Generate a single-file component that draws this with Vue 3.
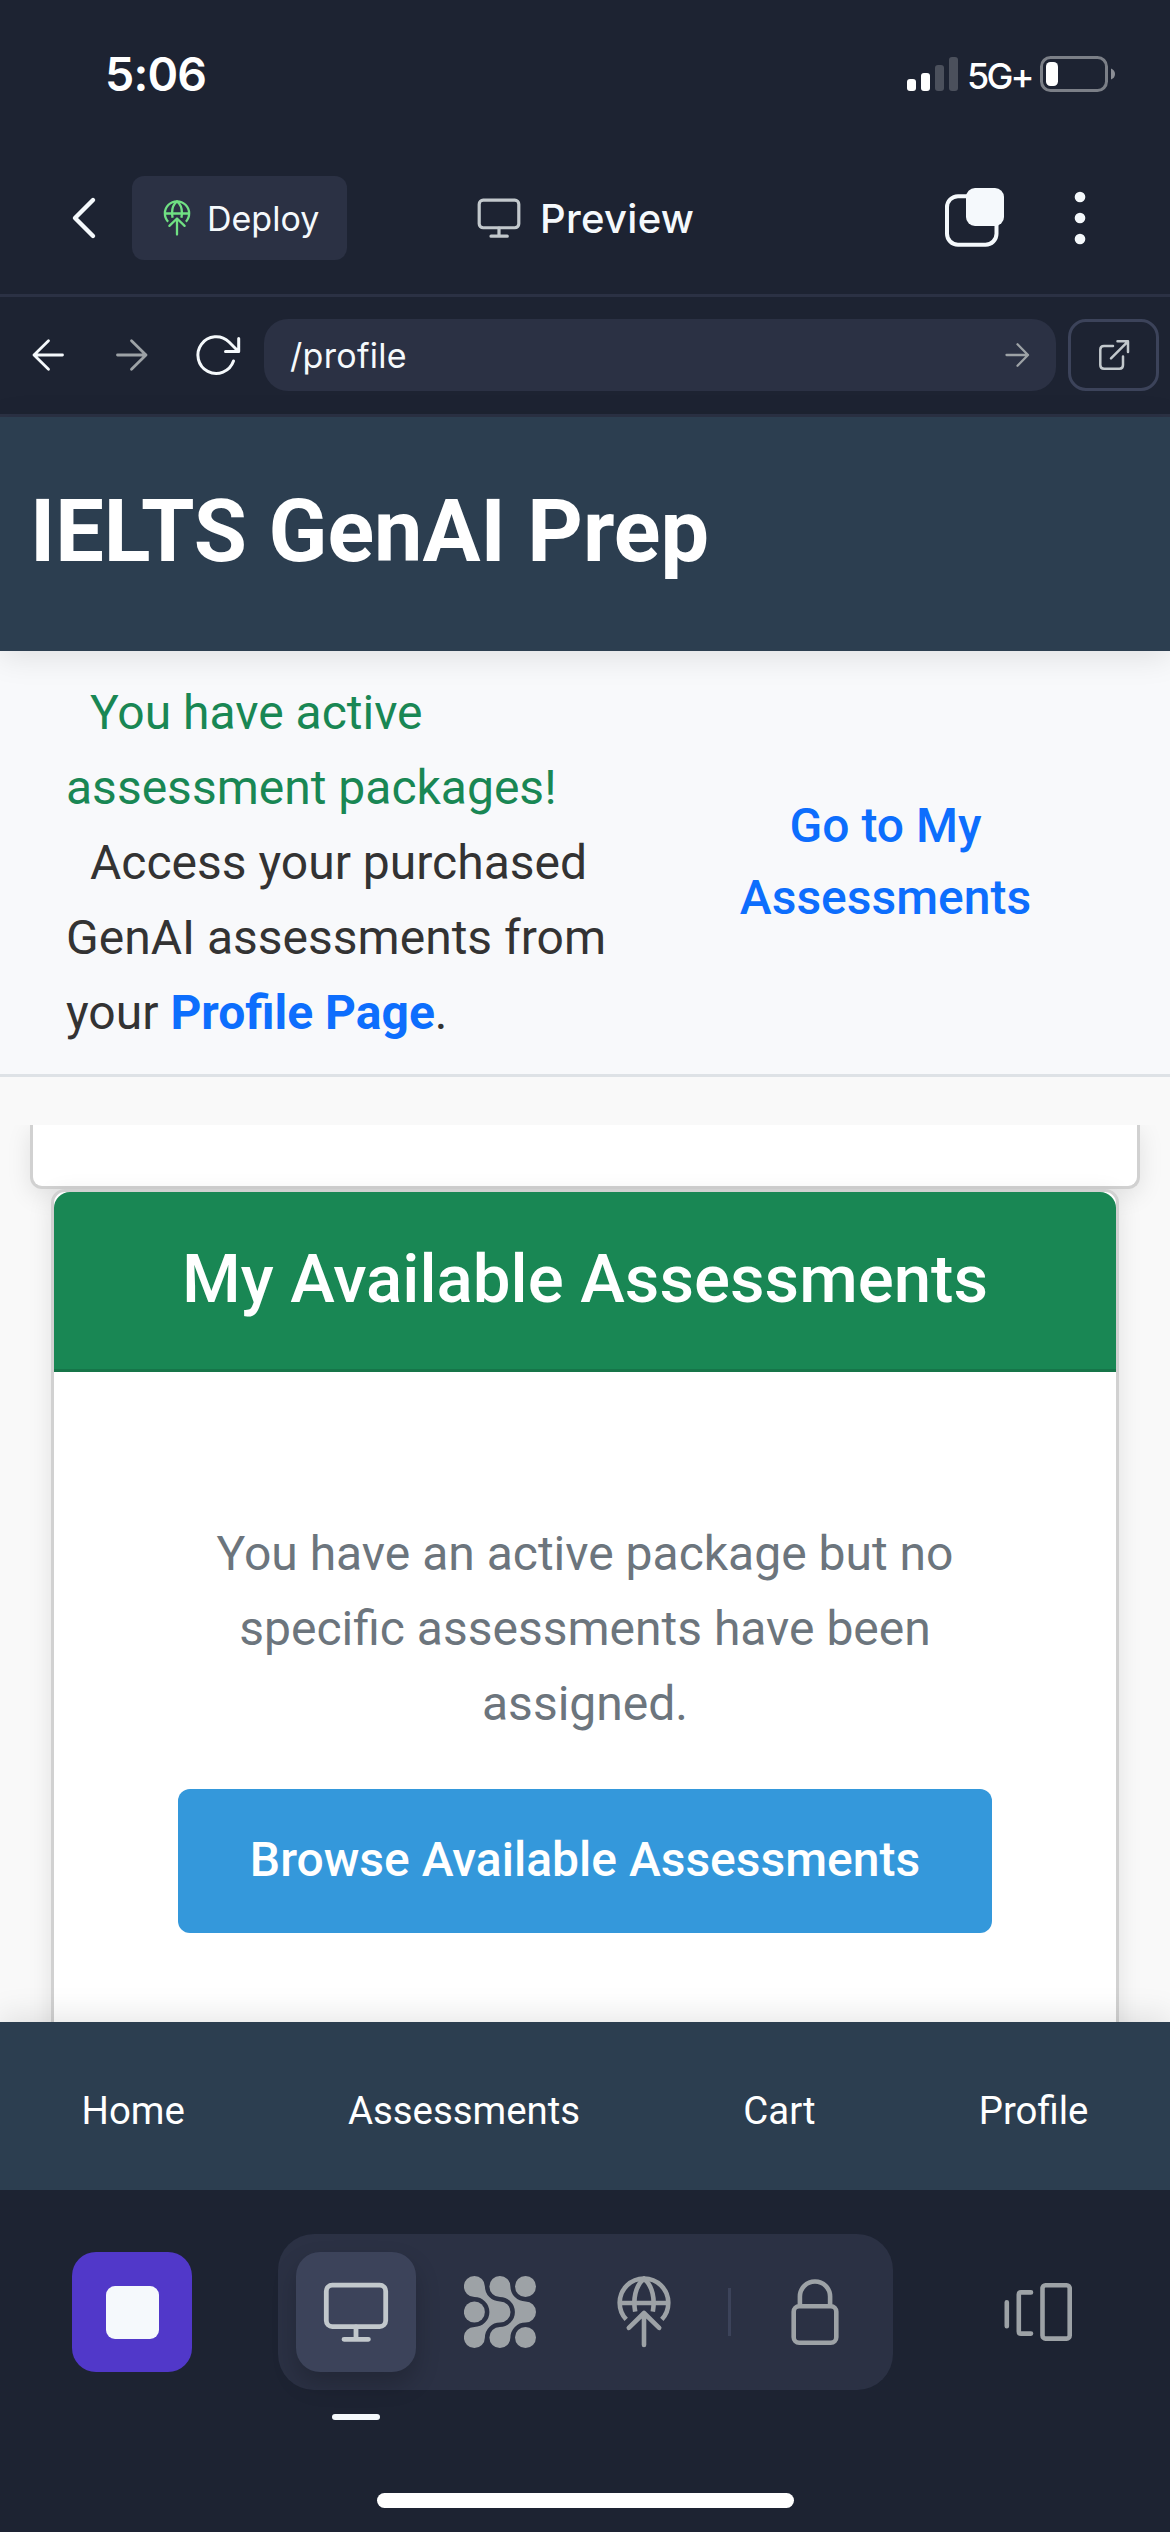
<script setup>
const signal = [
  { h: 12, on: true },
  { h: 18, on: true },
  { h: 26, on: false },
  { h: 34, on: false }
]
const links = ['Home', 'Assessments', 'Cart', 'Profile']
</script>

<template>
  <div class="screen">
    <svg class="defs" width="0" height="0" aria-hidden="true">
      <symbol id="deploy" viewBox="0 0 72 72">
        <g fill="none" stroke="currentColor" stroke-width="4.6">
          <path d="M18.2 43.4A24.3 24.3 0 1 1 53.8 43.4M12 27H60" />
          <path d="M27.2 35.6C25 24 27 10 36 2.8C45 10 47 24 44.8 35.6" />
          <path d="M36 37.5V69M20.8 51.8L36 37L51.2 51.8" stroke-linecap="round" stroke-linejoin="round" />
        </g>
      </symbol>
      <symbol id="monitor" viewBox="0 0 72 72">
        <g fill="none" stroke="currentColor" stroke-width="4.8" stroke-linecap="round">
          <rect x="6.3" y="9.2" width="59.4" height="41.4" rx="6" />
          <path d="M36 51V63M24 63.3H48.4" />
        </g>
      </symbol>
    </svg>

    <div class="status">
      <span class="time">5:06</span>
      <div class="status-right">
        <div class="signal">
          <i v-for="(s, i) in signal" :key="i" :class="{ on: s.on }" :style="{ height: s.h + 'px' }"></i>
        </div>
        <span class="net">5G+</span>
        <svg class="battery" width="76" height="36" viewBox="0 0 76 36">
          <rect x="1.5" y="1.5" width="65" height="33" rx="9" fill="none" stroke="#7b7f87" stroke-width="3" />
          <rect x="6" y="6" width="12" height="24" rx="4.5" fill="#fff" />
          <path d="M71 12.5Q75 14 75 18T71 23.5Z" fill="#8b8e95" />
        </svg>
      </div>
    </div>

    <div class="topbar">
      <svg class="chev" width="28" height="48" viewBox="0 0 28 48">
        <path d="M23 6L5 24L23 42" fill="none" stroke="#f5f9fc" stroke-width="4.4" stroke-linecap="round" stroke-linejoin="round" />
      </svg>
      <button class="deploy">
        <svg width="36" height="36"><use href="#deploy" /></svg>
        <span>Deploy</span>
      </button>
      <div class="title">
        <svg width="48" height="48"><use href="#monitor" /></svg>
        <span>Preview</span>
      </div>
      <svg class="tabs" width="60" height="60" viewBox="0 0 60 60">
        <rect x="2" y="8.2" width="49.5" height="48.5" rx="11" fill="none" stroke="#f5f9fc" stroke-width="4" />
        <rect x="21" y="0" width="38" height="38" rx="9" fill="#f5f9fc" />
      </svg>
      <svg class="dots" width="12" height="54" viewBox="0 0 12 54">
        <g fill="#f5f9fc"><circle cx="6" cy="6" r="5.3" /><circle cx="6" cy="27" r="5.3" /><circle cx="6" cy="48" r="5.3" /></g>
      </svg>
    </div>

    <div class="browser">
      <svg class="b-back" width="36" height="36" viewBox="0 0 36 36">
        <path d="M32.5 18H4M18.5 3.8L4 18L18.5 32.2" fill="none" stroke="#f5f9fc" stroke-width="2.8" stroke-linecap="round" stroke-linejoin="round" />
      </svg>
      <svg class="b-fwd" width="36" height="36" viewBox="0 0 36 36">
        <path d="M3.5 18H32M17.5 3.8L32 18L17.5 32.2" fill="none" stroke="#9da2a6" stroke-width="2.8" stroke-linecap="round" stroke-linejoin="round" />
      </svg>
      <svg class="b-reload" width="48" height="48" viewBox="0 0 48 48">
        <path d="M39.5 30A18.3 18.3 0 1 1 35 11L44.5 20.5M44.7 7.5V20.5H31.5" fill="none" stroke="#f5f9fc" stroke-width="3" stroke-linecap="round" stroke-linejoin="round" />
      </svg>
      <div class="url">
        <span>/profile</span>
        <svg width="28" height="28" viewBox="0 0 28 28">
          <path d="M3.5 14H25M14.5 3.3L25 14L14.5 24.7" fill="none" stroke="#9da2a6" stroke-width="2.3" stroke-linecap="round" stroke-linejoin="round" />
        </svg>
      </div>
      <button class="external">
        <svg width="36" height="36" viewBox="0 0 36 36">
          <path d="M17 9H8Q4.3 9 4.3 12.5V28Q4.3 31.7 8 31.7H23.5Q27 31.7 27 28V19.5M15 21.3L32 4.4M21.5 4.2H32V15" fill="none" stroke="#c2c8cc" stroke-width="2.5" stroke-linecap="round" stroke-linejoin="round" />
        </svg>
      </button>
    </div>

    <header class="app-header"><h1>IELTS GenAI Prep</h1></header>

    <section class="banner">
      <div class="banner-text">
        <p class="ok">You have active<br />assessment packages!</p>
        <p>Access your purchased<br />GenAI assessments from<br />your <a>Profile Page</a>.</p>
      </div>
      <a class="go">Go to My<br />Assessments</a>
    </section>

    <main class="content">
      <div class="clip">
        <div class="outer-card"></div>
        <div class="card">
          <h2>My Available Assessments</h2>
          <div class="card-body">
            <p>You have an active package but no<br />specific assessments have been<br />assigned.</p>
            <button>Browse Available Assessments</button>
          </div>
        </div>
      </div>
    </main>

    <nav class="nav"><a v-for="l in links" :key="l">{{ l }}</a></nav>

    <footer class="dock">
      <div class="dock-row">
        <button class="stop"><i></i></button>
        <div class="group">
          <div class="cell active">
            <svg width="72" height="72"><use href="#monitor" /></svg>
            <i class="indicator"></i>
          </div>
          <div class="cell">
            <svg width="72" height="72" viewBox="0 0 72 72" fill="currentColor">
              <path d="M10.4 0A10.5 10.5 0 0 1 20.9 10.5A15.1 15.1 0 0 0 36 25.5A10.5 10.5 0 0 1 36 46.5A15.1 15.1 0 0 0 20.9 61.5A10.5 10.5 0 1 1 10.4 51A15 15 0 0 0 10.4 21A10.5 10.5 0 0 1 10.4 0Z" />
              <path transform="translate(25.5 0)" d="M10.4 0A10.5 10.5 0 0 1 20.9 10.5A15.1 15.1 0 0 0 36 25.5A10.5 10.5 0 0 1 36 46.5A15.1 15.1 0 0 0 20.9 61.5A10.5 10.5 0 1 1 10.4 51A15 15 0 0 0 10.4 21A10.5 10.5 0 0 1 10.4 0Z" />
              <circle cx="61.5" cy="10.5" r="10.5" /><circle cx="10.4" cy="36" r="10.5" /><circle cx="61.5" cy="61.5" r="10.5" />
            </svg>
          </div>
          <div class="cell"><svg width="72" height="72"><use href="#deploy" /></svg></div>
          <i class="sep"></i>
          <div class="cell">
            <svg width="72" height="72" viewBox="0 0 72 72" fill="none" stroke="currentColor" stroke-width="4.6">
              <rect x="14.7" y="30.3" width="42.6" height="36.5" rx="5.5" />
              <path d="M20.9 30V20.6A15.1 15.1 0 0 1 51.1 20.6V30" />
            </svg>
          </div>
        </div>
        <svg class="panes" width="72" height="72" viewBox="0 0 72 72" fill="none" stroke="#9da2a6" stroke-width="4.6" stroke-linecap="round" stroke-linejoin="round">
          <rect x="40.5" y="9.2" width="27.2" height="53.4" rx="3" />
          <path d="M29 16.4H19Q16.8 16.4 16.8 18.6V55.4Q16.8 57.6 19 57.6H29M4.8 26.3V50.3" />
        </svg>
      </div>
      <div class="home-bar"></div>
    </footer>
  </div>
</template>

<style>
body { margin: 0; background: #1d2332; }
</style>

<style scoped>
* { box-sizing: border-box; }
h1, h2, p { margin: 0; }
button { border: 0; padding: 0; margin: 0; background: none; font: inherit; color: inherit; }
svg { display: block; flex: none; }
.defs { position: absolute; }
.screen { width: 1170px; height: 2532px; overflow: hidden; display: flex; flex-direction: column; background: #1d2332; font-family: Roboto, sans-serif; }
.screen > * { flex: none; }

.status { height: 150px; padding: 0 54px 2px 105px; display: flex; justify-content: space-between; align-items: center; color: #fff; font-family: Inter, sans-serif; }
.time { font-size: 46.5px; font-weight: 600; letter-spacing: -0.8px; }
.status-right { display: flex; align-items: center; }
.signal { display: flex; align-items: flex-end; gap: 5px; }
.signal i { width: 9px; border-radius: 3px; background: #4b505c; }
.signal i.on { background: #fff; }
.net { margin: 4px 9px 0 9px; width: 64px; font-size: 36px; line-height: 40px; font-weight: 500; letter-spacing: -2.8px; white-space: nowrap; }

.topbar { height: 147px; padding: 0 0 8px 70px; border-bottom: 3px solid #2b3144; display: flex; align-items: center; font-family: Inter, sans-serif; color: #f5f9fc; }
.deploy { margin-left: 34px; width: 215px; height: 84px; padding-left: 27px; border-radius: 12px; background: #2b3144; display: flex; align-items: center; font-size: 34px; }
.deploy svg { color: #70e083; }
.deploy span { margin-left: 12px; }
.title { width: 220px; margin-left: 128px; display: flex; align-items: center; font-size: 40px; font-weight: 500; letter-spacing: 0.3px; }
.title svg { color: #c2c8cc; }
.title span { margin-left: 17px; }
.tabs { margin-left: 250px; }
.dots { margin-left: 69px; }

.browser { height: 120px; padding: 0 11px 1px 30px; border-bottom: 3px solid #2b3144; display: flex; align-items: center; }
.b-fwd { margin-left: 48px; }
.b-reload { margin-left: 44px; }
.url { margin-left: 22px; width: 792px; height: 72px; border-radius: 24px; padding: 0 25px 0 26px; background: #2b3144; display: flex; align-items: center; justify-content: space-between; font: 34px Inter, sans-serif; letter-spacing: 0.3px; color: #f5f9fc; }
.external { margin-left: 12px; width: 91px; height: 72px; border: 3px solid #3c435a; border-radius: 18px; display: flex; align-items: center; justify-content: center; }

.app-header { position: relative; z-index: 2; height: 234px; padding: 0 30px 5px; background: #2c3e50; box-shadow: 0 6px 30px rgba(0, 0, 0, 0.1); display: flex; align-items: center; }
.app-header h1 { font-size: 86.4px; font-weight: 700; color: #fff; }

.banner { height: 426px; padding: 24px 66px; background: #f8f9fb; border-bottom: 3px solid #dee2e6; display: flex; align-items: center; font-size: 48px; line-height: 75px; color: #333; }
.banner-text { width: 601px; }
.banner-text p { text-indent: 24px; white-space: nowrap; }
.banner-text .ok { color: #198754; }
.banner-text a { color: #0d6efd; font-weight: 700; }
.go { flex: 1; padding-bottom: 2px; text-align: center; font-weight: 500; line-height: 72px; color: #0d6efd; }

.content { height: 945px; padding-top: 48px; background: #f9f9f9; }
.clip { height: 897px; overflow: hidden; padding: 0 30px; }
.outer-card { height: 64px; background: #fff; border: 3px solid #d1d1d1; border-top: 0; border-radius: 0 0 12px 12px; box-shadow: 0 6px 24px rgba(0, 0, 0, 0.1); }
.card { position: relative; margin: 0 21px; height: 1000px; background: #fff; border: 3px solid #d1d1d1; border-radius: 14px; box-shadow: 0 6px 24px rgba(0, 0, 0, 0.1); }
.card h2 { height: 180px; padding-bottom: 3px; border-bottom: 3px solid #167549; border-radius: 16px 16px 0 0; background: #198754; color: #fff; font-size: 67.2px; font-weight: 500; display: flex; align-items: center; justify-content: center; white-space: nowrap; }
.card-body { padding-top: 144px; display: flex; flex-direction: column; align-items: center; text-align: center; font-size: 48px; line-height: 75px; color: #6c757d; }
.card-body button { margin-top: 48px; width: 814px; height: 144px; padding-bottom: 4px; border-radius: 12px; background: #3498db; color: #fff; font-weight: 500; }

.nav { position: relative; z-index: 2; height: 168px; padding-top: 8px; background: #2c3e50; box-shadow: 0 -6px 30px rgba(0, 0, 0, 0.1); display: flex; align-items: center; justify-content: space-around; font-size: 38.4px; color: #fff; }

.dock { position: relative; z-index: 3; height: 342px; padding-top: 44px; background: #1d2332; }
.dock-row { display: flex; align-items: center; padding-left: 72px; }
.stop { width: 120px; height: 120px; border-radius: 24px; background: #5138c9; display: flex; align-items: center; justify-content: center; }
.stop i { width: 53px; height: 53px; border-radius: 9px; background: #f5f9fc; }
.group { margin-left: 86px; width: 615px; height: 156px; padding: 0 18px; border-radius: 36px; background: #2b3144; display: flex; align-items: center; color: #9da2a6; }
.cell { width: 120px; height: 120px; border-radius: 24px; display: flex; align-items: center; justify-content: center; }
.cell + .cell { margin-left: 24px; }
.cell.active { position: relative; background: #3c435a; color: #c2c8cc; box-shadow: 0 12px 24px rgba(2, 2, 3, 0.2); }
.indicator { position: absolute; left: 36px; top: 162px; width: 48px; height: 6px; border-radius: 3px; background: #f5f9fc; }
.sep { width: 3px; height: 48px; margin: 0 24px; background: #3c435a; }
.panes { margin-left: 109px; }
.home-bar { width: 417px; height: 15px; margin: 103px 0 0 377px; border-radius: 8px; background: #fff; }
</style>
